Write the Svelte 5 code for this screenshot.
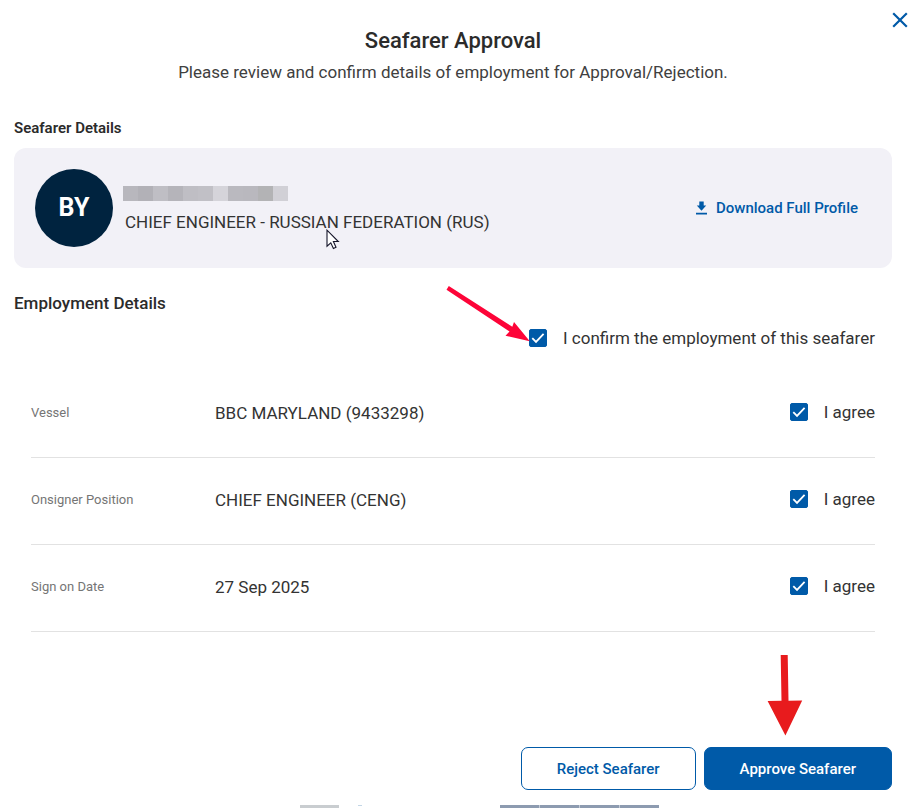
<script>
  let confirmed = $state(true)
  let rows = $state([
    { label: 'Vessel', value: 'BBC MARYLAND (9433298)', agreed: true },
    { label: 'Onsigner Position', value: 'CHIEF ENGINEER (CENG)', agreed: true },
    { label: 'Sign on Date', value: '27 Sep 2025', agreed: true },
  ])

  // name is hidden behind mosaic tiles
  const tiles = ['#b8b7bd', '#b2b1b7', '#bfbec4', '#b5b4ba', '#bfbec4', '#c1c0c6', '#d5d4da', '#bab9bf', '#b9b8be', '#b3b3b5', '#d1d0d6']
</script>

<div class="modal" role="dialog" aria-labelledby="title">
  <button class="close" aria-label="Close">
    <svg width="16" height="16" viewBox="0 0 16 16"><path d="M1.2 1.2 14.8 14.8M14.8 1.2 1.2 14.8" stroke="#005aa8" stroke-width="2.2" fill="none" /></svg>
  </button>

  <header>
    <h1 id="title">Seafarer Approval</h1>
    <p>Please review and confirm details of employment for Approval/Rejection.</p>
  </header>

  <h2>Seafarer Details</h2>
  <section class="card">
    <div class="avatar">BY</div>
    <div class="who">
      <div class="mosaic">
        {#each tiles as c}<i style="background: {c}"></i>{/each}
      </div>
      <div class="rank">
        CHIEF ENGINEER - RUSSIAN FEDERATION (RUS)
        <svg class="cursor" width="14" height="21" viewBox="0 0 14 21"><path d="M1 1.2V17.2L4.8 13.8 7.4 19.4 10 18.2 7.4 12.5H12.3Z" fill="#fff" stroke="#15152a" stroke-width="1.1" /></svg>
      </div>
    </div>
    <a class="download" href="#profile">
      <svg width="11" height="14" viewBox="0 0 11 14" fill="#005aa8"><path d="M3.3 0.5H7.7V4.4H10.2L5.5 9.8 0.8 4.4H3.3ZM0 11.7H11V13.5H0Z" /></svg>
      Download Full Profile
    </a>
  </section>

  <h2 class="large">Employment Details</h2>
  <div class="confirm">
    <label>
      <input type="checkbox" bind:checked={confirmed} />
      I confirm the employment of this seafarer
      <svg class="arrow-confirm" width="86" height="60" viewBox="0 0 86 60" fill="#fd0438"><path d="M2.8 1 66.3 41.8 68 37 83.8 56.2 59.5 50.8 63.5 46.5 0.5 4.8Z" /></svg>
    </label>
  </div>

  <table>
    <tbody>
      {#each rows as row, i}
        <tr>
          <th scope="row" id="row{i}">{row.label}</th>
          <td>{row.value}</td>
          <td class="agree">
            <label><input type="checkbox" bind:checked={row.agreed} aria-describedby="row{i}" />I agree</label>
          </td>
        </tr>
      {/each}
    </tbody>
  </table>

  <footer>
    <button class="reject">Reject Seafarer</button>
    <button class="approve">
      Approve Seafarer
      <svg class="arrow-approve" width="36" height="82" viewBox="0 0 36 82" fill="#e81b1d"><path d="M13.7 1H20.7L21.5 46.7 35.2 46.5 18.4 81.5 0.6 47 14.5 46.8Z" /></svg>
    </button>
  </footer>
</div>

<div class="behind">
  <i class="grey"></i>
  <i class="dot"></i>
  <span><i></i><i></i><i></i><i></i></span>
</div>

<style>
  :global(body) { margin: 0; background: #fff; overflow-x: hidden; }
  .modal { position: relative; padding: 29px 24px 0 14px; color: #333; font-family: Roboto, sans-serif; font-size: 17px; line-height: 24px; }
  .close { position: absolute; top: 12px; right: 8px; padding: 0; border: none; background: none; cursor: pointer; }
  svg { display: block; }

  header { text-align: center; }
  h1 { margin: 0; font-size: 22px; line-height: 24px; font-weight: 500; color: #2b2b2b; }
  header p { margin: 7px 0 0; color: #404040; }
  h2 { margin: 32px 0 8px; font-size: 15px; line-height: 24px; font-weight: 600; color: #2b2b2b; }
  h2.large { margin: 23px 0 11px; font-size: 17px; font-weight: 500; }

  .card { display: flex; align-items: center; height: 120px; padding: 0 34px 0 21px; box-sizing: border-box; border-radius: 12px; background: #f2f1f7; }
  .avatar { width: 78px; height: 78px; border-radius: 50%; background: #00233f; color: #fff; font-size: 25px; font-weight: 700; display: grid; place-items: center; }
  .who { flex: 1; margin-left: 10px; padding-top: 4px; }
  .mosaic { display: flex; margin-bottom: 9px; }
  .mosaic i { width: 15px; height: 15px; }
  .rank { position: relative; margin-left: 2px; }
  .cursor { position: absolute; left: 201px; top: 19px; }
  .download { display: flex; align-items: center; gap: 9px; color: #005aa8; font-size: 15px; font-weight: 500; text-decoration: none; }

  .confirm { display: flex; justify-content: flex-end; padding: 0 17px; }
  label { position: relative; display: inline-flex; align-items: center; gap: 16px; cursor: pointer; }
  input { appearance: none; width: 18px; height: 18px; margin: 0; border: 1px solid #005aa8; border-radius: 2px; background: #fff; cursor: pointer; }
  input:checked { background: #005aa8 url("data:image/svg+xml,%3Csvg xmlns='http://www.w3.org/2000/svg' viewBox='0 0 16 16'%3E%3Cpath d='M2.3 8.2l3.7 3.7 7.6-8' fill='none' stroke='%23fff' stroke-width='1.8'/%3E%3C/svg%3E") center / 16px no-repeat; }
  .arrow-confirm { position: absolute; left: -83px; top: -41px; pointer-events: none; }

  table { width: calc(100% - 34px); margin: 21px 17px 0; border-collapse: collapse; }
  th, td { height: 84px; padding: 0 0 2px; border-bottom: 1px solid #e2e2e2; text-align: left; }
  th { width: 184px; font-size: 13px; font-weight: 400; color: #757575; }
  td.agree { text-align: right; }

  footer { display: flex; justify-content: flex-end; gap: 8px; margin-top: 115px; }
  footer button { position: relative; height: 43px; padding: 0 35px; border: 1px solid #005aa8; border-radius: 7px; font-family: inherit; font-size: 15px; font-weight: 500; cursor: pointer; }
  .reject { background: #fff; color: #005aa8; }
  .approve { background: #005aa8; color: #fff; }
  .arrow-approve { position: absolute; left: 62px; top: -94px; pointer-events: none; }

  .behind { display: flex; height: 3px; margin-top: 15px; padding-left: 300px; overflow: hidden; }
  .behind i { height: 3px; }
  .grey { width: 39px; background: #c9cdd0; }
  .dot { width: 4px; margin-left: 19px; background: #c3d6e6; }
  .behind .dot { height: 1px; }
  .behind span { display: flex; gap: 1px; margin-left: 138px; background: #c5ccd6; }
  .behind span i { width: 39px; background: #8d9bb0; }
</style>
